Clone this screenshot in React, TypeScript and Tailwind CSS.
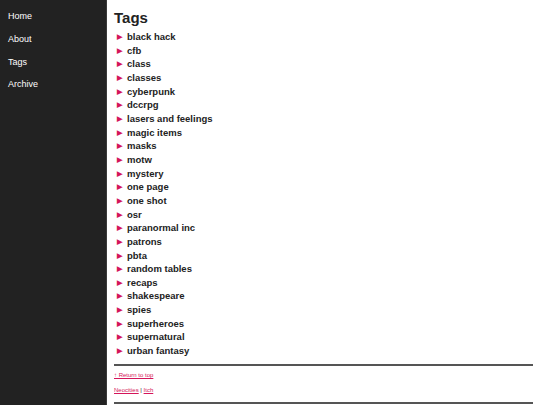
const tags = [
  "black hack",
  "cfb",
  "class",
  "classes",
  "cyberpunk",
  "dccrpg",
  "lasers and feelings",
  "magic items",
  "masks",
  "motw",
  "mystery",
  "one page",
  "one shot",
  "osr",
  "paranormal inc",
  "patrons",
  "pbta",
  "random tables",
  "recaps",
  "shakespeare",
  "spies",
  "superheroes",
  "supernatural",
  "urban fantasy",
]

const nav = ["Home", "About", "Tags", "Archive"]

export default function App() {
  return (
    <div className="flex min-h-[405px] bg-white font-['Liberation_Sans',Arial,sans-serif]">
      <aside className="w-[107px] shrink-0 bg-[#222222] border-r border-[#3a3a3a] pt-[5px] pl-[8px]">
        <ul>
          {nav.map((item) => (
            <li key={item} className="text-[9px] leading-[22.75px] text-white">
              <a href="#">{item}</a>
            </li>
          ))}
        </ul>
      </aside>

      <main className="flex-1 px-[7px] pt-[9px]">
        <h1 className="text-[15px] leading-[18px] font-bold text-[#222] mb-[3px]">Tags</h1>
        <ul className="pl-[3px]">
          {tags.map((tag) => (
            <li key={tag} className="flex items-center text-[9.5px] leading-[13.65px] font-bold text-[#222]">
              <span className="text-[#d4145a] text-[7px] w-[10px]">▶</span>
              <a href="#">{tag}</a>
            </li>
          ))}
        </ul>

        <div className="mt-[6px] border-t-2 border-[#555]" />
        <footer className="text-[6px] leading-[15px] pt-[2px] pb-[4px]">
          <p>
            <a href="#" className="text-[#d4145a] underline">↑ Return to top</a>
          </p>
          <p>
            <a href="#" className="text-[#d4145a] underline">Neocities</a>
            <span className="text-[#222]"> | </span>
            <a href="#" className="text-[#d4145a] underline">Itch</a>
          </p>
        </footer>
        <div className="border-t-2 border-[#555]" />
      </main>
    </div>
  )
}
